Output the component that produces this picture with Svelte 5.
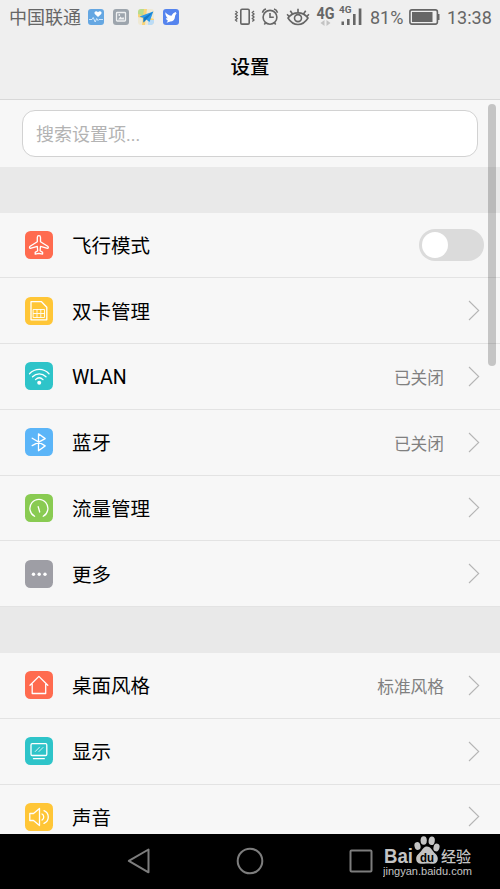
<script lang="ts">
    type Item = {
        icon: string;
        label: string;
        color: string;
        value?: string;
        toggle?: boolean;
    };

    const groups: Item[][] = [
        [
            { icon: 'plane', label: '飞行模式', color: '#ff6b4f', toggle: true },
            { icon: 'sim', label: '双卡管理', color: '#ffc637' },
            { icon: 'wifi', label: 'WLAN', color: '#2ec4c9', value: '已关闭' },
            { icon: 'bluetooth', label: '蓝牙', color: '#5bb5f8', value: '已关闭' },
            { icon: 'data', label: '流量管理', color: '#89cb52' },
            { icon: 'more', label: '更多', color: '#9e9ea5' },
        ],
        [
            { icon: 'home', label: '桌面风格', color: '#ff6b4f', value: '标准风格' },
            { icon: 'display', label: '显示', color: '#2ec4c9' },
            { icon: 'sound', label: '声音', color: '#ffc637' },
        ],
    ];

    let airplane = $state(false);
</script>

<div class="phone">
    <div class="status-bar">
        <span class="carrier">中国联通</span>
        <svg class="apps" width="94" height="18" viewBox="0 0 94 18">
            <rect x="0" y="1" width="16" height="16" rx="3" fill="#65a7e2" />
            <path d="M10 9 6.800 5.900C5.400 3.800 8.500 2 10 4.300 11.500 2 14.700 3.800 13.200 5.900Z" fill="#fff" />
            <path d="M1 11.500h3l1.200-2 2 4.500 1.500-3.500 1.300 2 1-1H15" fill="none" stroke="#d9edff" stroke-width=".9" />
            <rect x="25" y="1" width="16" height="16" rx="3" fill="#9da5ad" />
            <rect x="28.500" y="4.500" width="9" height="8.500" rx=".8" fill="none" stroke="#eef0f1" stroke-width="1.300" />
            <path d="m30 11.500 2.400-3 1.600 1.500 1.300-1 1.200 2.500z" fill="#eef0f1" />
            <circle cx="31.300" cy="7" r=".9" fill="#eef0f1" />
            <rect x="50" y="1" width="16" height="16" rx="3" fill="#eee9d5" />
            <path d="M53 1h5l-1 6-7 1V4a3 3 0 0 1 3-3Z" fill="#b9dc8c" />
            <path d="M50 6 66 11v3L50 9zM56 1h3l-2 16h-3z" fill="#fbd477" />
            <path d="M60 12h6v3l-2 2h-4z" fill="#bcdcf5" />
            <path d="m51.500 8.500 13.800-5L61.500 14l-3.200-2.600-2.800 3.100V10z" fill="#2c98e8" />
            <path d="m55.500 10 9.800-6.500-7 7.900-2.800 3.100z" fill="#1478c4" />
            <rect x="75" y="1" width="16" height="16" rx="3" fill="#5584ee" />
            <path d="M77.300 4.200c2 2.300 4 3.200 6.200 3.500.8-2.100 2.500-3 4.800-4-.1.700-.3 1.100-.7 1.600l1.300-.2c-1 1.200-1.700 2-1.900 3.600-.2 3.100-2 4.700-4.700 4.800l-3.700 1.300 1.400-2.300c-1.200-.5-1.900-1.200-2.200-2.300l2 .1c-1.600-1.300-2.500-3.300-2.500-6.100Z" fill="#fff" />
        </svg>
        <svg class="signals" width="130" height="28" viewBox="0 0 130 28">
            <g fill="none" stroke="#666" stroke-width="1.600">
                <rect x="6.800" y="9.300" width="8.400" height="14.800" rx="1.200" />
                <path d="m1.500 11 1.700 1.500-1.700 1.500 1.700 1.500-1.700 1.500 1.700 1.500-1.700 1.500 1.700 1.500M20 11l-1.700 1.500L20 14l-1.700 1.500L20 17l-1.700 1.500L20 20l-1.700 1.500" stroke-width="1.300" />
                <circle cx="36" cy="17.300" r="6.900" />
                <path d="M36 13.100v4.200h3.800M28.500 12.800a5 5 0 0 1 3.500-3.700M43.500 12.800A5 5 0 0 0 40 9.100M31.800 22.600l-1.500 1.900M40.200 22.600l1.500 1.900" />
                <path d="M54 18c5.200-6.800 14.800-6.800 20 0-5.200 8.600-14.800 8.600-20 0Z" />
                <circle cx="64" cy="18.100" r="3.500" />
                <path d="M64 12.900V8.800M58.500 14l-2.200-3.200M69.500 14l2.200-3.200M55.300 16.700l-2.200-2.400M72.700 16.700l2.200-2.400" />
            </g>
            <text x="82.500" y="18.500" textLength="18" lengthAdjust="spacingAndGlyphs" font-size="16" font-weight="700">4G</text>
            <path d="M90.500 20v6l-4-3zM92.500 20v6l4-3z" fill="#c3c3c3" />
            <text x="105" y="13" textLength="12.500" lengthAdjust="spacingAndGlyphs" font-size="9.500" font-weight="700">4G</text>
            <path d="M107.500 21.500h2.500V25h-2.500zM113 19h2.600v6H113zM119 14h2.600v11H119zM124.700 8.500h2.700V25h-2.700z" fill="#666" />
        </svg>
        <span class="battery-text">81%</span>
        <svg class="battery" width="32" height="18" viewBox="0 0 32 18">
            <rect x=".9" y="1.900" width="27.500" height="14.200" rx="2" fill="none" stroke="#666" stroke-width="1.600" />
            <path d="M3 4h20.500v10H3zM29 6h1.500v6H29z" fill="#666" />
        </svg>
        <span class="time">13:38</span>
    </div>

    <header><h1>设置</h1></header>

    <main>
        <div class="search">
            <input type="text" placeholder="搜索设置项..." />
        </div>

        {#each groups as group}
            <section>
                {#each group as item (item.icon)}
                    <div class="row">
                        <svg class="icon" viewBox="0 0 28 28">
                            <rect width="28" height="28" rx="5.500" fill={item.color} />
                            <g class="glyph">
                                {#if item.icon === 'plane'}
                                    <path d="M12.300 6.500c0-2.400 3.200-2.400 3.200 0v4.300l7.200 4.500c.8.600.8 2.200-.2 2l-7-1.900-.4 4.300 2.500 1.700v1.700l-3.700-.8-3.700.8v-1.700l2.500-1.700-.4-4.300-7 1.900c-1 .2-1-1.400-.2-2l7.200-4.500z" />
                                {:else if item.icon === 'sim'}
                                    <path d="M6 4.700h10.500l5.300 5.600v12.500H6z" />
                                    <path d="M8.500 12.500h11v8h-11zM8.500 16.500h11M12 12.500v3M15.800 12.500v3M12 20.500v-3M15.800 20.500v-3" stroke-width=".9" />
                                {:else if item.icon === 'wifi'}
                                    <path d="M4.500 11.800c5.500-5.800 14-5.800 19.500 0M7.500 14.800c3.900-4 9.600-4 13.500 0M10.500 17.600c2.300-2.200 5.200-2.200 7.500 0" />
                                    <circle class="solid" cx="14.200" cy="20.800" r="2" />
                                {:else if item.icon === 'bluetooth'}
                                    <path d="m7.200 10.200 13 7.700-6.700 4.800V5.800l6.700 4.800-13 7" />
                                {:else if item.icon === 'data'}
                                    <path d="M9.600 22.300a9 9 0 1 1 8.600 0" />
                                    <path d="m13.200 12.700 1.500 5.300" />
                                {:else if item.icon === 'more'}
                                    <circle class="solid" cx="8.500" cy="14.200" r="1.700" />
                                    <circle class="solid" cx="14.200" cy="14.200" r="1.700" />
                                    <circle class="solid" cx="20" cy="14.200" r="1.700" />
                                {:else if item.icon === 'home'}
                                    <path d="m5 14.300 8.900-8.900 8.900 8.900M7.200 13.200v9.300h13.500v-9.300" />
                                {:else if item.icon === 'display'}
                                    <rect x="6" y="6.700" width="15.800" height="11.800" rx="1.200" />
                                    <path d="M8.500 21.700h10.800" />
                                    <path d="m10.300 14.500 4.200-4.300M14 14.500l4-4" stroke-width=".8" />
                                {:else if item.icon === 'sound'}
                                    <path d="M4.800 10.500h3.700l6-5v17l-6-5H4.800z" />
                                    <path d="M17 11c2.300 1 2.300 5.100 0 6.100M19 7.700c5.700 2.600 5.700 10.100 0 12.700" />
                                {/if}
                            </g>
                        </svg>
                        <span class="label">{item.label}</span>
                        {#if item.toggle}
                            <button
                                class="switch"
                                class:on={airplane}
                                aria-label={item.label}
                                onclick={() => (airplane = !airplane)}
                            ></button>
                        {:else}
                            {#if item.value}
                                <span class="value">{item.value}</span>
                            {/if}
                            <svg class="arrow" width="12" height="21" viewBox="0 0 12 21">
                                <path d="m1 1 9.700 9.500L1 20" />
                            </svg>
                        {/if}
                    </div>
                {/each}
            </section>
        {/each}
        <div class="scrollbar"></div>
    </main>

    <nav>
        <svg width="24" height="26" viewBox="0 0 24 26">
            <path d="M21.500 1.500v22.800L1.800 12.900z" />
        </svg>
        <svg width="28" height="28" viewBox="0 0 28 28">
            <circle cx="14" cy="14" r="12.300" />
        </svg>
        <svg width="24" height="24" viewBox="0 0 24 24">
            <rect x="1.500" y="1.500" width="21" height="21" rx="1" />
        </svg>
        <svg class="watermark" width="96" height="50" viewBox="0 0 96 50">
            <text x="1" y="27" textLength="29" lengthAdjust="spacingAndGlyphs" font-size="19.500" font-weight="700">Bai</text>
            <ellipse cx="34.500" cy="10" rx="3" ry="4" transform="rotate(-15 34.500 10)" />
            <ellipse cx="40.700" cy="4.500" rx="3.100" ry="4.300" />
            <ellipse cx="48.700" cy="4.800" rx="3.100" ry="4.300" transform="rotate(8 48.700 4.800)" />
            <ellipse cx="53.500" cy="11.500" rx="3" ry="3.900" transform="rotate(15 53.500 11.500)" />
            <path d="M44 10.500c3.200 0 4.600 3 6.500 5.200 2.200 2.500 4.500 4 4.300 7-.2 4-3 5.500-6.300 5-2.600-.4-5-.4-7.600 0-4.500.7-7.700-1-7.700-5 0-3.300 2.500-4.800 4.600-7.200 1.800-2.200 3-5 6.200-5Z" />
            <text class="du" x="37" y="25.500" textLength="14" lengthAdjust="spacingAndGlyphs" font-size="13" font-weight="700">du</text>
            <text class="cjk" x="58" y="26" textLength="30" font-size="15" font-weight="500">经验</text>
            <text x="0" y="39" textLength="89" lengthAdjust="spacingAndGlyphs" font-size="10">jingyan.baidu.com</text>
        </svg>
    </nav>
</div>

<style>
    :global(body) {
        margin: 0;
        overflow: hidden;
    }
    .phone {
        display: flex;
        flex-direction: column;
        width: 500px;
        height: 889px;
        background: #f7f7f7;
        color: #000;
        font-family: Roboto, 'Noto Sans CJK SC', sans-serif;
    }
    .status-bar {
        display: flex;
        align-items: center;
        height: 34px;
        flex: none;
        padding-left: 9px;
        box-sizing: border-box;
        background: #efefef;
        color: #666;
        white-space: nowrap;
    }
    .carrier {
        width: 72px;
        padding-top: 1px;
        font-size: 18px;
        line-height: 34px;
    }
    .apps {
        margin-left: 7px;
    }
    .signals {
        margin: 0 6px 6px 52px;
    }
    .signals text {
        fill: #666;
    }
    .battery-text,
    .time {
        font-size: 18px;
    }
    .battery-text {
        width: 34px;
    }
    .battery {
        margin: 0 6px 0 5px;
    }
    header {
        display: flex;
        align-items: center;
        justify-content: center;
        height: 66px;
        flex: none;
        padding-bottom: 2px;
        box-sizing: border-box;
        border-bottom: 1px solid #d8d8d8;
        background: #efefef;
    }
    h1 {
        margin: 0;
        font-size: 19.5px;
        font-weight: 500;
    }
    main {
        position: relative;
        height: 733.5px;
        flex: none;
        overflow: hidden;
    }
    .search {
        height: 66.6px;
        padding: 10px 22px 0;
        box-sizing: border-box;
    }
    input {
        display: block;
        width: 100%;
        height: 47px;
        padding: 1px 13px 0;
        box-sizing: border-box;
        border: 1px solid #d2d2d2;
        border-radius: 13px;
        background: #fff;
        font: 18px Roboto, 'Noto Sans CJK SC', sans-serif;
    }
    input::placeholder {
        color: #b3b3b3;
    }
    section {
        padding-top: 46px;
        background: linear-gradient(#e9e9e9 46px, transparent 46px);
    }
    .row {
        display: flex;
        align-items: center;
        height: 65.75px;
        padding: 0 20px 0 25px;
        box-sizing: border-box;
        border-bottom: 1px solid #e3e3e3;
    }
    .icon {
        width: 28px;
        height: 28px;
        flex: none;
    }
    .glyph {
        fill: none;
        stroke: #fff;
        stroke-width: 1.3;
        stroke-linejoin: round;
        stroke-linecap: round;
    }
    .solid {
        fill: #fff;
        stroke: none;
    }
    .label {
        flex: 1;
        margin-left: 19px;
        padding-top: 4px;
        font-size: 19.5px;
        line-height: 28px;
    }
    .value {
        margin-right: 24px;
        padding-top: 2px;
        color: #808080;
        font-size: 16.7px;
    }
    .arrow {
        fill: none;
        stroke: #b5b5b5;
        stroke-width: 1.1;
    }
    .switch {
        display: flex;
        width: 65px;
        height: 32px;
        margin-right: -4px;
        padding: 3px;
        box-sizing: border-box;
        border: none;
        border-radius: 16px;
        background: #dbdbdb;
    }
    .switch::before {
        content: '';
        width: 26px;
        height: 26px;
        border-radius: 50%;
        background: #fff;
    }
    .switch.on {
        justify-content: flex-end;
        background: #2ec4c9;
    }
    .scrollbar {
        position: absolute;
        top: 4px;
        right: 4px;
        width: 8px;
        height: 262px;
        border-radius: 4px;
        background: rgba(0, 0, 0, 0.2);
    }
    nav {
        display: flex;
        align-items: center;
        flex: 1;
        padding-left: 127px;
        background: #000;
    }
    nav svg {
        flex: none;
        fill: none;
        stroke: #7d7d7d;
        stroke-width: 2;
        stroke-linejoin: round;
    }
    nav svg:nth-child(2) {
        margin: 0 85px;
    }
    nav .watermark {
        margin-left: 10px;
        fill: #c4c4c4;
        stroke: none;
    }
    .watermark text {
        font-family: 'Liberation Sans', sans-serif;
    }
    .watermark .du {
        fill: #000;
    }
    .watermark .cjk {
        font-family: 'Noto Sans CJK SC', sans-serif;
    }
</style>
